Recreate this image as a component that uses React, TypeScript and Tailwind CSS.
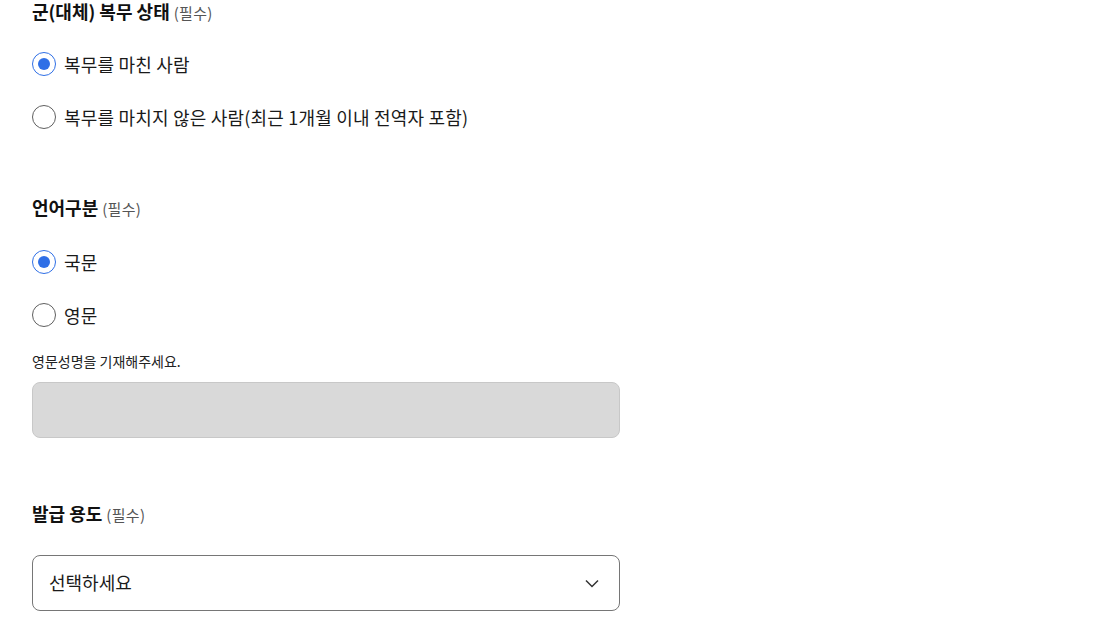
import React from "react";

const font = { fontFamily: '"Noto Sans CJK KR", "Noto Sans", sans-serif' };

function Radio({ checked, label }: { checked?: boolean; label: string }) {
  return (
    <div className="flex items-center h-[40px]">
      <div
        className={
          checked
            ? "w-[24px] h-[24px] rounded-full border-[1.5px] border-[#2f6fe6] flex items-center justify-center bg-white"
            : "w-[24px] h-[24px] rounded-full border border-[#5f5f5f] bg-white"
        }
      >
        {checked && <div className="w-[12px] h-[12px] rounded-full bg-[#2f6fe6]" />}
      </div>
      <span className="ml-[8px] text-[18px] tracking-[0.2px] text-[#1a1a1a] leading-[24px] -mt-[1px]">{label}</span>
    </div>
  );
}

function Title({ text }: { text: string }) {
  return (
    <div className="h-[26px]">
      <div className="flex items-baseline leading-[22px]">
        <span className="text-[18px] font-bold text-[#111]">{text}</span>
        <span className="ml-[4px] text-[15px] tracking-[0.3px] text-[#555]">(필수)</span>
      </div>
    </div>
  );
}

export default function App() {
  return (
    <div className="bg-white w-[1116px] h-[622px] overflow-hidden" style={font}>
      <div className="pl-[32px] w-[620px] flex flex-col">
        <Title text="군(대체) 복무 상태" />
        <div className="mt-[18px] flex flex-col gap-[13px]">
          <Radio checked label="복무를 마친 사람" />
          <Radio label="복무를 마치지 않은 사람(최근 1개월 이내 전역자 포함)" />
        </div>
        <div className="mt-[59px]">
          <Title text="언어구분" />
        </div>
        <div className="mt-[20px] flex flex-col gap-[13px]">
          <Radio checked label="국문" />
          <Radio label="영문" />
        </div>
        <div className="mt-[16px] text-[14px] leading-[20px] text-[#222]">영문성명을 기재해주세요.</div>
        <div className="mt-[11px] h-[56px] rounded-[8px] border border-[#c8c8c8] bg-[#d9d9d9]" />
        <div className="mt-[64px]">
          <Title text="발급 용도" />
        </div>
        <div className="mt-[27px] h-[56px] rounded-[8px] border border-[#767676] bg-white flex items-center justify-between pl-[16px] pr-[20px]">
          <span className="text-[18px] text-[#1a1a1a] -mt-[1px]">선택하세요</span>
          <svg width="14" height="9" viewBox="0 0 14 9" fill="none">
            <path d="M1 1.5 L7 7.5 L13 1.5" stroke="#333" strokeWidth="1.5" />
          </svg>
        </div>
      </div>
    </div>
  );
}
